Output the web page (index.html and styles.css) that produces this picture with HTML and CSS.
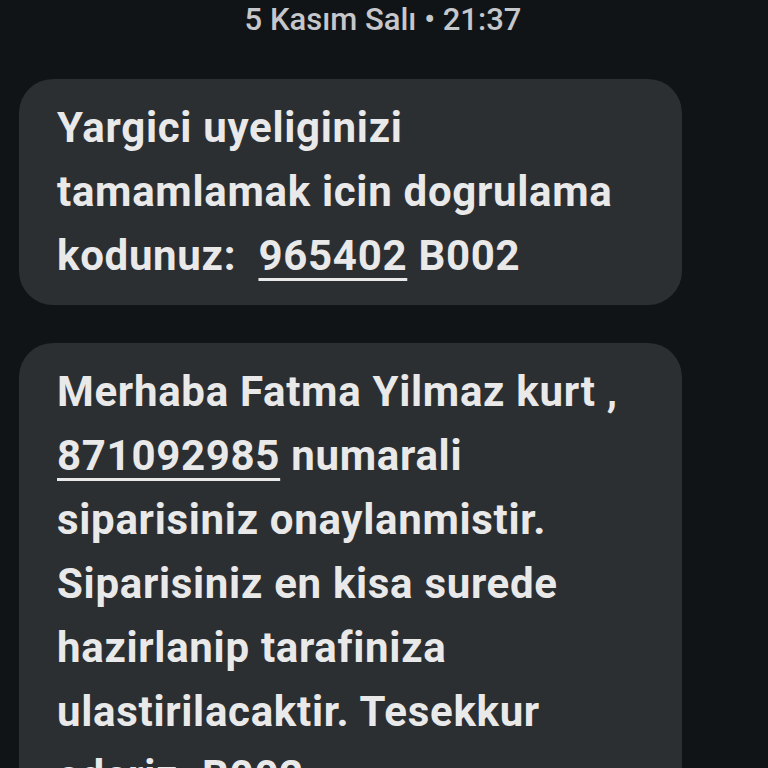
FILE: index.html
```html
<!DOCTYPE html>
<html>

<head>
    <meta name="viewport" content="width=device-width, initial-scale=1">
    <link rel="stylesheet" href="styles.css">
</head>

<body>

<div class="date">5 Kasım Salı • 21:37</div>

<div class="thread">
    <div class="bubble">
        Yargici uyeliginizi tamamlamak icin dogrulama kodunuz:&nbsp; <a href="#" class="code">965402</a> B002
    </div>

    <div class="bubble">
        Merhaba Fatma Yilmaz kurt , <a href="#" class="code">871092985</a> numarali siparisiniz onaylanmistir. Siparisiniz en kisa surede hazirlanip tarafiniza ulastirilacaktir. Tesekkur ederiz. B002
    </div>
</div>

</body>
</html>
```

FILE: styles.css
```css
body {
    margin: 0;
    background-color: #111417;
    font-family: Roboto, "Noto Sans", sans-serif;
    color: #e9e9ea;
    height: 768px;
    overflow: hidden;
}

.date {
    height: 44px;
    line-height: 40px;
    text-align: center;
    font-size: 31px;
    font-weight: 500;
    color: #c5c7ca;
    padding-right: 2px;
}

.thread {
    display: flex;
    flex-direction: column;
    gap: 38px;
    padding: 35px 86px 0 19px;
}

.bubble {
    background-color: #2c2f32;
    border-radius: 34px;
    padding: 17px 40px 17px 38px;
    font-size: 42px;
    font-weight: 700;
    line-height: 64px;
    letter-spacing: 0.7px;
}

.code {
    color: inherit;
    text-decoration: underline;
    text-decoration-thickness: 3px;
    text-underline-offset: 8px;
}
```
